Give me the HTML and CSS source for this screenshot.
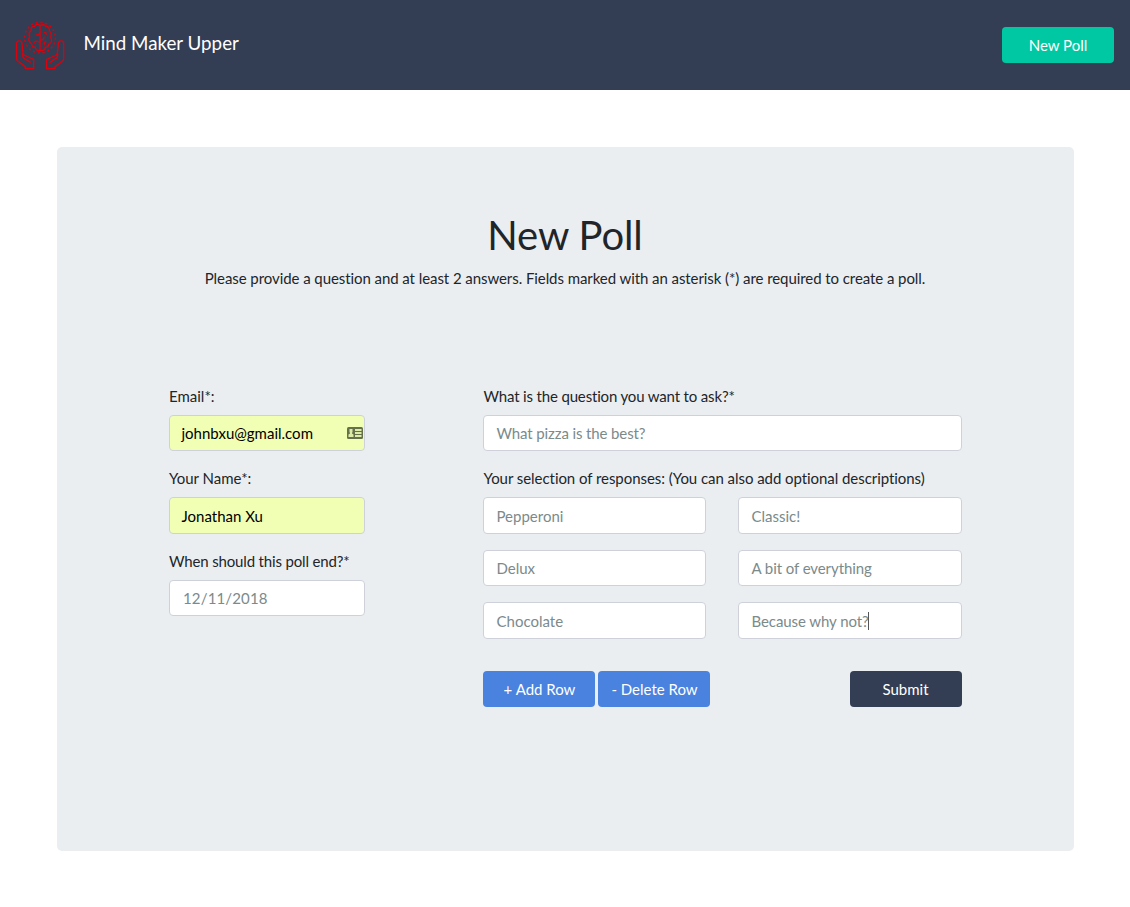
FILE: index.html
```html
<!DOCTYPE html>
<html lang="en">
<head>
<meta charset="utf-8">
<title>Mind Maker Upper</title>
<link rel="stylesheet" href="styles.css">
</head>
<body>
<header class="navbar">
  <a class="brand">
    <svg class="logo" viewBox="30 30 150 150" aria-hidden="true">
      <circle cx="105" cy="83" r="46" stroke-dasharray="6.500 7.950"/>
      <path d="M105 122V47C99 41 91 43 89 49C80 48 76 56 79 62C72 66 71 74 74 80C69 88 72 98 80 102C80 109 86 113 91 111C91 119 97 123 105 122H112C117 121 121 117 121 112C127 113 131 108 131 103C140 99 143 90 137 82C140 74 138 66 133 63C135 55 129 48 122 49C119 43 112 43 105 47"/>
      <path d="M105 67C105 73 98 77 92 74M105 98C98 91 88 92 87 99M105 90C112 91 118 87 117 80M117 68C121 66 125 69 124 74M124 96C119 95 116 100 119 104"/>
      <path d="M61 176V170L37 152C35 150 35 147 35 144V100C35 91 50 90 51 100L54 130L57 135L86 148V176ZM54 130C50 138 55 146 63 148L77 158"/>
      <path d="M150 176V170L174 152C176 150 176 147 176 144V100C176 91 161 90 160 100L157 130L154 135L125 148V176ZM157 130C161 138 156 146 148 148L134 158"/>
    </svg>
    <span class="brand-name">Mind Maker Upper</span>
  </a>
  <button class="btn btn-success">New Poll</button>
</header>
<main class="panel">
  <div class="intro">
    <h1>New Poll</h1>
    <p>Please provide a question and at least 2 answers. Fields marked with an asterisk (*) are required to create a poll.</p>
  </div>
  <div class="form">
    <section class="col-person">
      <label>Email*:</label>
      <div class="field filled has-icon">johnbxu@gmail.com
        <svg class="card-icon" viewBox="0 0 16 12" aria-hidden="true">
          <rect width="16" height="12" rx="1.5" fill="#66714b"/>
          <path d="M2.500 2h3v3.500h-.5v1l1.500 1V10h-5V7.500l1.500-1v-1h-.5zM8 2h6.500v2H8zM8 5h6.500v2H8zM8 8h6.500v2H8z" fill="#dceba6"/>
        </svg>
      </div>
      <label>Your Name*:</label>
      <div class="field filled">Jonathan Xu</div>
      <label class="tight">When should this poll end?*</label>
      <div class="field date">12/11/2018</div>
    </section>
    <section class="col-poll">
      <label class="tight">What is the question you want to ask?*</label>
      <div class="field question">What pizza is the best?</div>
      <label class="hint">Your selection of responses: (You can also add optional descriptions)</label>
      <div class="responses">
        <div class="field">Pepperoni</div><div class="field">Classic!</div>
        <div class="field">Delux</div><div class="field last">A bit of everything</div>
        <div class="field">Chocolate</div><div class="field last">Because why not?<span class="caret"></span></div>
      </div>
      <div class="actions">
        <button class="btn btn-primary btn-add">+ Add Row</button>
        <button class="btn btn-primary btn-add">- Delete Row</button>
        <button class="btn btn-dark">Submit</button>
      </div>
    </section>
  </div>
</main>
</body>
</html>
```
FILE: styles.css
```css
* { box-sizing: border-box; }
body {
  margin: 0;
  background: #fff;
  color: #212529;
  font: 15px/22.5px Lato, "Liberation Sans", sans-serif;
  font-variant-ligatures: none;
}
.navbar {
  display: flex;
  align-items: center;
  justify-content: space-between;
  height: 90px;
  padding: 0 16px 0 15px;
  background: #333d54;
}
.brand { display: flex; align-items: center; gap: 18.5px; color: #fff; }
.brand-name { font-size: 18.75px; line-height: 28px; padding-bottom: 4px; }
.logo { width: 50px; height: 50px; }
.logo circle, .logo path {
  fill: none;
  stroke: #de000b;
  stroke-width: 4;
}
.panel {
  width: 1017px;
  height: 704px;
  margin: 57px 0 0 57px;
  padding: 64px 112px;
  background: #ebeef1;
  border-radius: 5px;
}
.intro { text-align: center; margin: 0 -40px; }
h1 { margin: 0 1px 8px 0; font-size: 40px; line-height: 48px; font-weight: 400; letter-spacing: -0.1px; }
p { margin: 0 1px 0 0; letter-spacing: -0.07px; }
.form {
  display: grid;
  grid-template-columns: 196px 479px;
  column-gap: 118px;
  margin-top: 95.25px;
}
label { display: block; margin-bottom: 7.5px; }
.tight { letter-spacing: -0.16px; }
.hint { letter-spacing: -0.055px; }
.col-poll label { padding-left: 0.5px; }
.field {
  height: 36.5px;
  margin-bottom: 16px;
  padding: 6.3px 12.5px 5px;
  border: 1px solid #ced1da;
  border-radius: 4px;
  background: #fff;
  color: #7b8a8b;
  white-space: nowrap;
}
.filled { background: #f1ffb5; color: #000; padding-left: 11.5px; }
.has-icon { display: flex; align-items: center; justify-content: space-between; padding: 6px 1px 6px 11.5px; }
.card-icon { width: 16px; height: 12px; }
.date { letter-spacing: 0.15px; padding-left: 13px; }
.question { letter-spacing: -0.12px; }
.last { letter-spacing: -0.08px; }
.responses {
  display: grid;
  grid-template-columns: 223px 224px;
  column-gap: 32px;
  row-gap: 16px;
}
.responses .field { margin: 0; }
.caret {
  display: inline-block;
  width: 1px;
  height: 18px;
  margin-left: -1px;
  background: #555;
  vertical-align: -3px;
}
.actions { display: flex; gap: 3px; margin-top: 32px; }
.btn {
  width: 112px;
  height: 36px;
  padding: 0;
  border: 0;
  border-radius: 4px;
  color: #fff;
  font: inherit;
}
.btn-success { background: #00c8a2; }
.btn-primary { background: #4a82df; }
.btn-add { padding-left: 1px; }
.btn-dark { background: #333d54; margin-left: auto; padding-right: 1px; }
```
